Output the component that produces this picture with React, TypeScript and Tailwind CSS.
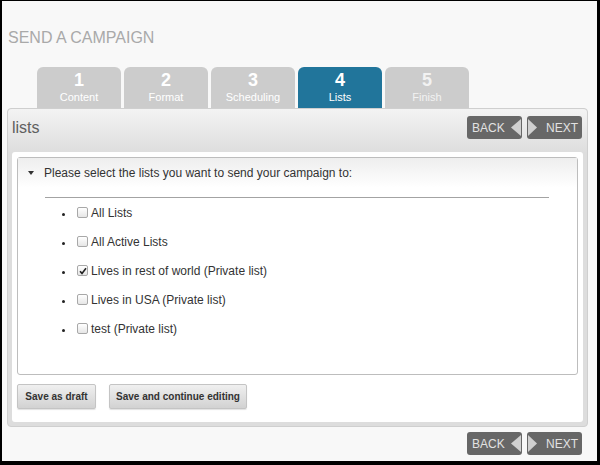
const steps = [
  { num: "1", label: "Content" },
  { num: "2", label: "Format" },
  { num: "3", label: "Scheduling" },
  { num: "4", label: "Lists", active: true },
  { num: "5", label: "Finish", dim: true },
];

const lists = [
  { name: "All Lists", checked: false },
  { name: "All Active Lists", checked: false },
  { name: "Lives in rest of world (Private list)", checked: true },
  { name: "Lives in USA (Private list)", checked: false },
  { name: "test (Private list)", checked: false },
];

function NavButtons() {
  return (
    <div className="flex gap-[5px]">
      <button
        type="button"
        className="flex h-[23px] w-[55px] items-center justify-between rounded-[3px] bg-[#676767] pl-[5px] pr-[1px] text-[12px] leading-none text-[#e2e2e2]"
      >
        <span>BACK</span>
        <svg width="10" height="17" viewBox="0 0 10 17">
          <path d="M10 0 L0 8.5 L10 17 Z" fill="#d0d0d0" />
        </svg>
      </button>
      <button
        type="button"
        className="flex h-[23px] w-[55px] items-center justify-between rounded-[3px] bg-[#676767] pl-[1px] pr-[4px] text-[12px] leading-none text-[#e2e2e2]"
      >
        <svg width="9" height="17" viewBox="0 0 9 17">
          <path d="M0 0 L9 8.5 L0 17 Z" fill="#d0d0d0" />
        </svg>
        <span>NEXT</span>
      </button>
    </div>
  );
}

function CheckBox({ checked }: { checked: boolean }) {
  return (
    <span className="flex h-[11px] w-[11px] items-center justify-center rounded-[2px] border border-[#a8a8a8] bg-gradient-to-b from-white to-[#e6e6e6]">
      {checked && (
        <svg width="8" height="8" viewBox="0 0 8 8">
          <path d="M1 4.2 L3 6.4 L7 1.2" fill="none" stroke="#222" strokeWidth="1.6" />
        </svg>
      )}
    </span>
  );
}

export default function App() {
  return (
    <div className="h-[465px] w-[600px] bg-black pb-[4px] pl-[2px] pr-[3px] pt-px">
      <div
        className="flex h-full flex-col bg-[#f8f8f8]"
        style={{ fontFamily: '"Liberation Sans", Arial, sans-serif' }}
      >
        <h1 className="ml-[6px] mt-[28px] h-[18px] text-[16px] font-normal leading-[18px] text-[#a9a9a9]">
          SEND A CAMPAIGN
        </h1>

        <div className="ml-[35px] mt-[20px] flex gap-[3px]">
          {steps.map((s) => (
            <div
              key={s.num}
              className={
                "flex h-[41px] w-[84px] flex-col items-center rounded-t-[6px] pt-[4px] " +
                (s.active ? "bg-[#21759b] text-white" : s.dim ? "bg-[#cccccc] text-[#f2f2f2]" : "bg-[#cccccc] text-white")
              }
            >
              <span className="h-[18px] text-[18px] font-bold leading-[18px]">{s.num}</span>
              <span className="mt-[2px] text-[11px] leading-[13px]">{s.label}</span>
            </div>
          ))}
        </div>

        <div className="ml-[5px] flex h-[319px] w-[581px] flex-col rounded-[4px] border border-[#cfcfcf] bg-[#dddddd]">
          <div className="flex h-[43px] items-start justify-between rounded-t-[4px] bg-gradient-to-b from-[#f3f3f3] to-[#dedede] pl-[4px] pr-[5px] pt-[7px]">
            <span className="text-[16px] leading-[23px] text-[#5f5f5f]">lists</span>
            <NavButtons />
          </div>

          <div className="mx-[4px] mb-[4px] flex flex-1 flex-col rounded-[3px] bg-white p-[5px]">
            <div className="flex h-[218px] flex-col rounded-[3px] border border-[#bdbdbd]">
              <div className="flex items-center bg-gradient-to-b from-[#eeeeee] to-white pb-[7px] pl-[10px] pt-[7px] text-[12px] leading-[16px] text-[#333]">
                <svg width="6" height="4" viewBox="0 0 6 4" className="mr-[10px]">
                  <path d="M0 0 L6 0 L3 4 Z" fill="#333" />
                </svg>
                <span>Please select the lists you want to send your campaign to:</span>
              </div>
              <div className="ml-[27px] mt-[9px] h-[1px] w-[504px] bg-[#a3a3a3]" />
              <ul className="flex flex-col">
                {lists.map((l) => (
                  <li key={l.name} className="flex h-[29px] items-center text-[12px] leading-[16px] text-[#333]">
                    <span className="ml-[44px] mt-[4px] h-[3px] w-[3px] rounded-full bg-[#222]" />
                    <span className="ml-[12px]">
                      <CheckBox checked={l.checked} />
                    </span>
                    <span className="ml-[3px]">{l.name}</span>
                  </li>
                ))}
              </ul>
            </div>

            <div className="mt-[9px] flex gap-[13px]">
              <button
                type="button"
                className="h-[25px] w-[79px] rounded-[2px] border border-[#c4c4c4] bg-gradient-to-b from-[#f0f0f0] to-[#d2d2d2] text-[10px] font-bold text-[#333] shadow-[0_1px_1px_rgba(0,0,0,0.12)]"
              >
                Save as draft
              </button>
              <button
                type="button"
                className="h-[25px] w-[138px] rounded-[2px] border border-[#c4c4c4] bg-gradient-to-b from-[#f0f0f0] to-[#d2d2d2] text-[10px] font-bold text-[#333] shadow-[0_1px_1px_rgba(0,0,0,0.12)]"
              >
                Save and continue editing
              </button>
            </div>
          </div>
        </div>

        <div className="mr-[15px] mt-[5px] flex justify-end">
          <NavButtons />
        </div>
      </div>
    </div>
  );
}
